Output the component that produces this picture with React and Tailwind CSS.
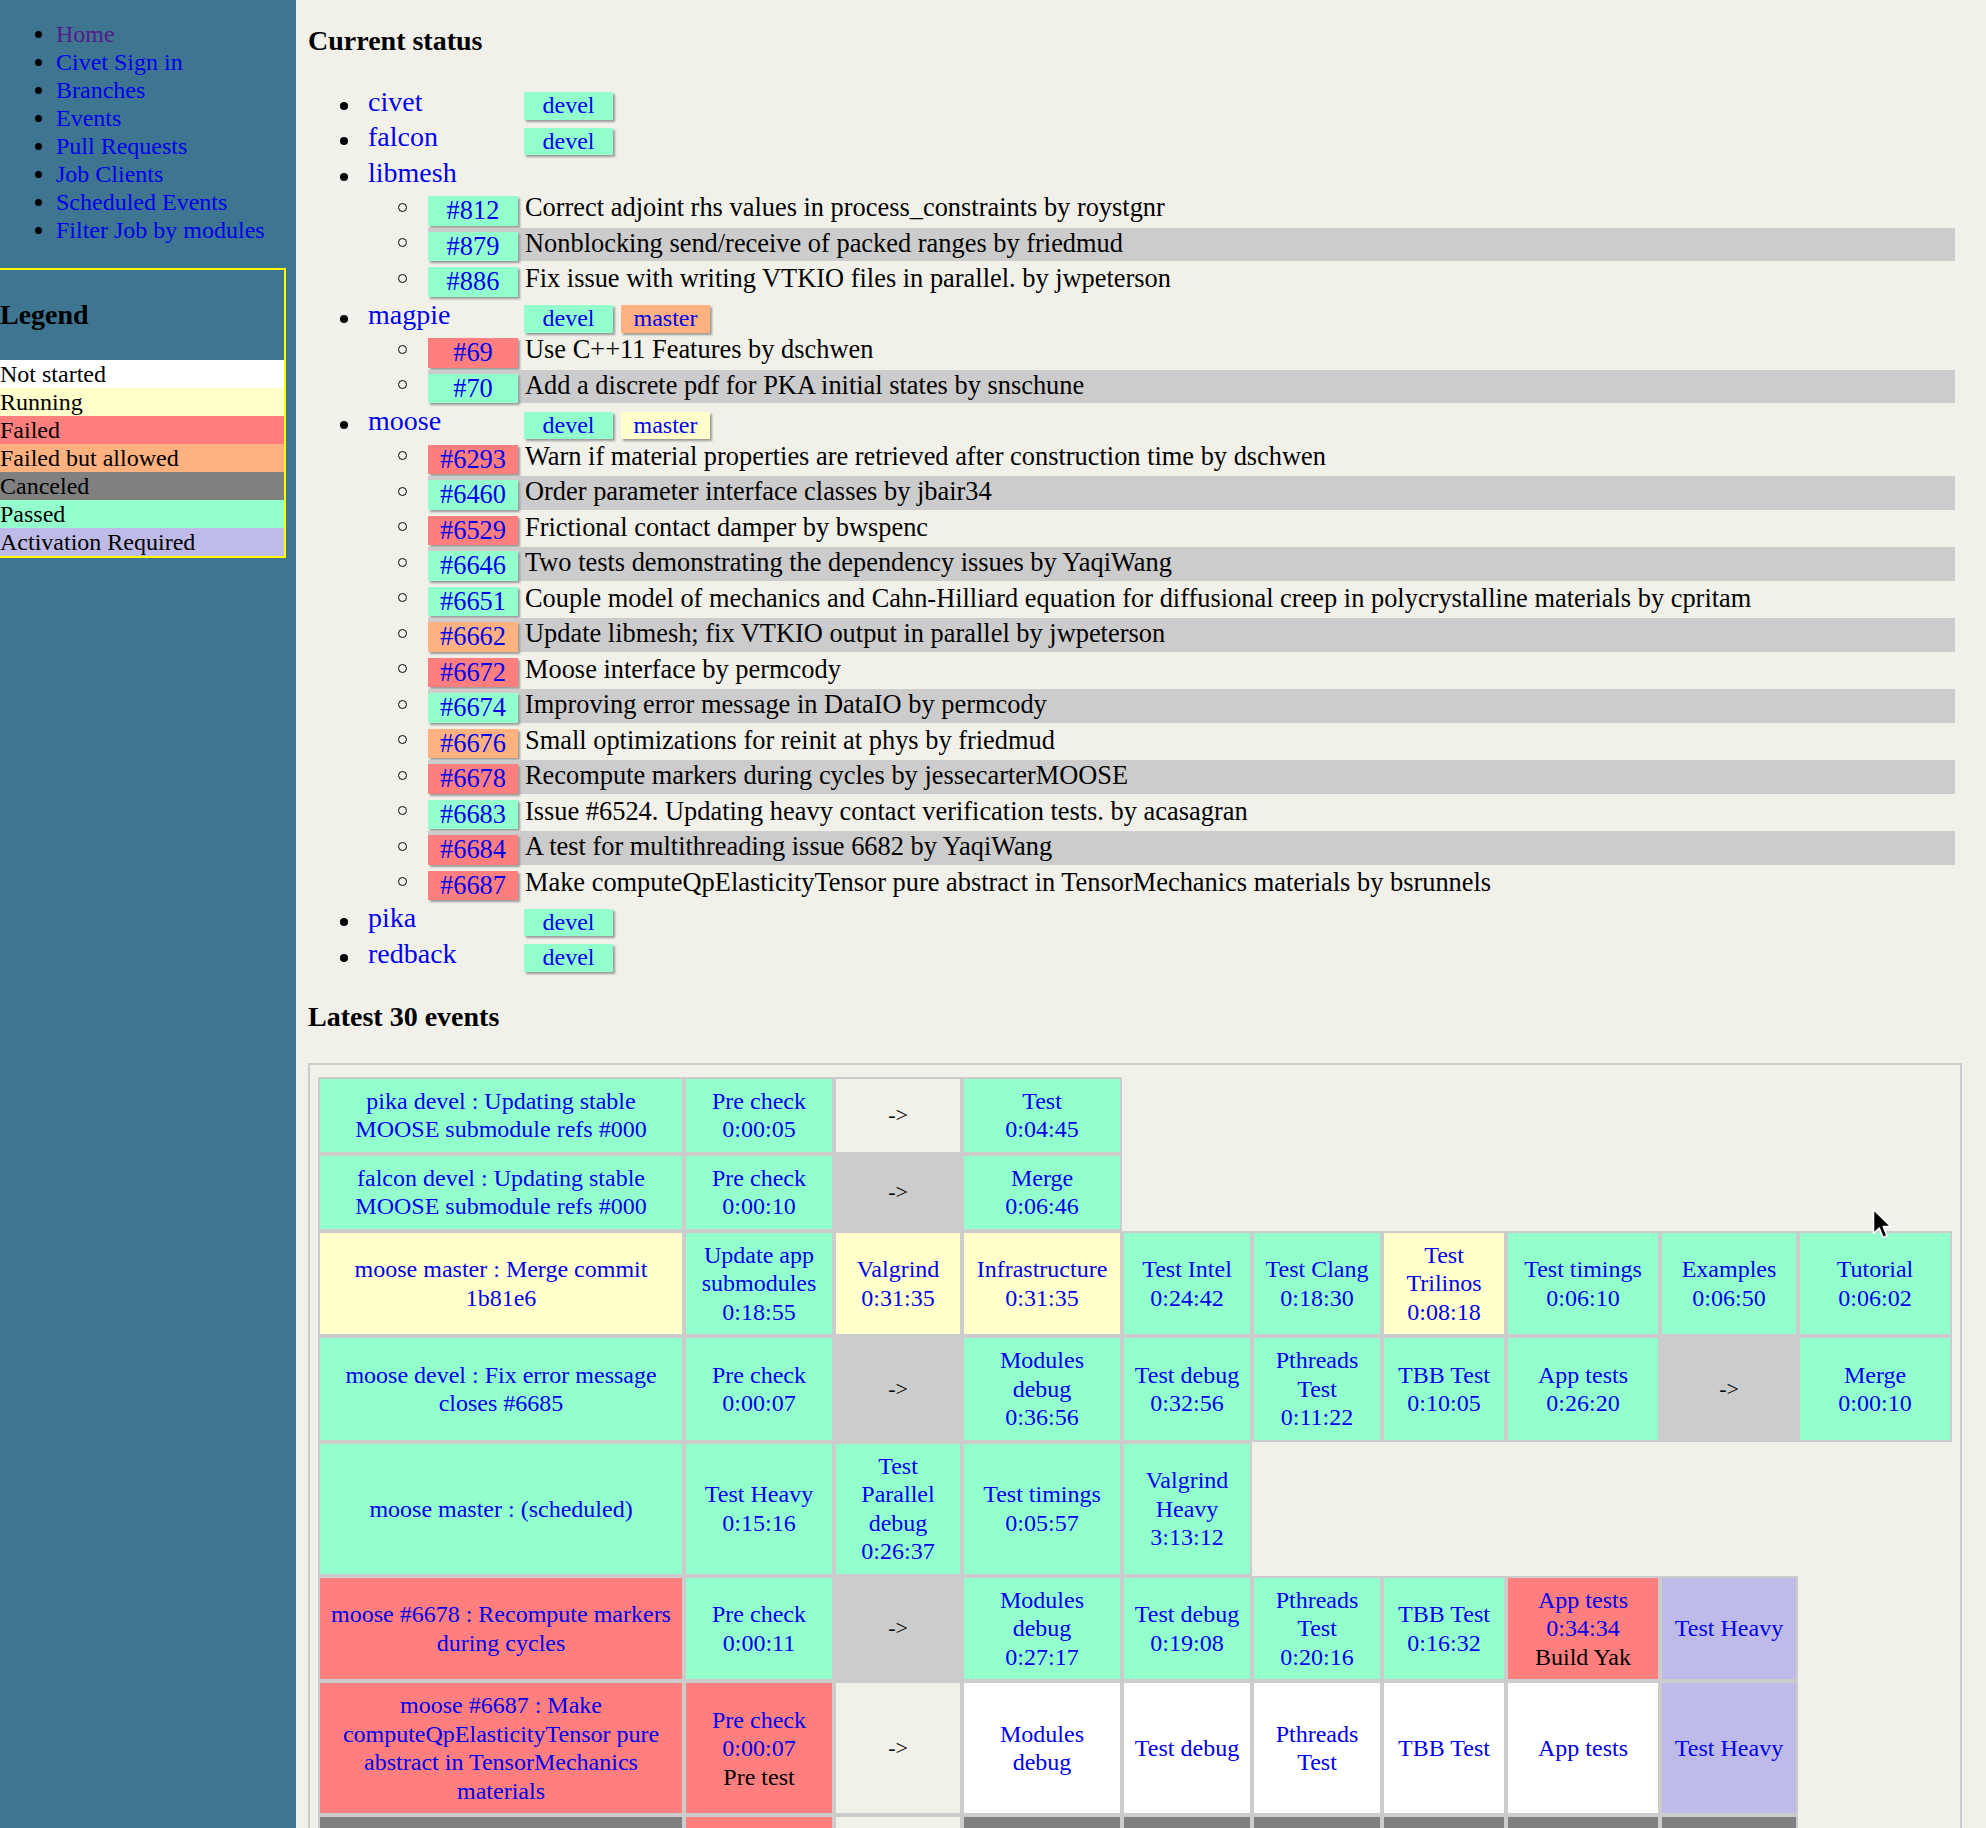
import React from 'react';

const bg = {
  passed: 'bg-[#93ffcc]',
  running: 'bg-[#ffffcc]',
  failed: 'bg-[#ff7f7f]',
  allowed: 'bg-[#ffb27f]',
  canceled: 'bg-[#808080]',
  notStarted: 'bg-white',
  activation: 'bg-[#bfbbe8]',
  waiting: 'bg-[#cccccc]',
  none: '',
};

const navLinks = [
  'Home',
  'Civet Sign in',
  'Branches',
  'Events',
  'Pull Requests',
  'Job Clients',
  'Scheduled Events',
  'Filter Job by modules',
];

const legend = [
  ['Not started', 'notStarted'],
  ['Running', 'running'],
  ['Failed', 'failed'],
  ['Failed but allowed', 'allowed'],
  ['Canceled', 'canceled'],
  ['Passed', 'passed'],
  ['Activation Required', 'activation'],
];

const repos = [
  { name: 'civet', branches: [['devel', 'passed']] },
  { name: 'falcon', branches: [['devel', 'passed']] },
  {
    name: 'libmesh',
    branches: [],
    prs: [
      ['#812', 'passed', 'Correct adjoint rhs values in process_constraints by roystgnr'],
      ['#879', 'passed', 'Nonblocking send/receive of packed ranges by friedmud'],
      ['#886', 'passed', 'Fix issue with writing VTKIO files in parallel. by jwpeterson'],
    ],
  },
  {
    name: 'magpie',
    branches: [['devel', 'passed'], ['master', 'allowed']],
    prs: [
      ['#69', 'failed', 'Use C++11 Features by dschwen'],
      ['#70', 'passed', 'Add a discrete pdf for PKA initial states by snschune'],
    ],
  },
  {
    name: 'moose',
    branches: [['devel', 'passed'], ['master', 'running']],
    prs: [
      ['#6293', 'failed', 'Warn if material properties are retrieved after construction time by dschwen'],
      ['#6460', 'passed', 'Order parameter interface classes by jbair34'],
      ['#6529', 'failed', 'Frictional contact damper by bwspenc'],
      ['#6646', 'passed', 'Two tests demonstrating the dependency issues by YaqiWang'],
      ['#6651', 'passed', 'Couple model of mechanics and Cahn-Hilliard equation for diffusional creep in polycrystalline materials by cpritam'],
      ['#6662', 'allowed', 'Update libmesh; fix VTKIO output in parallel by jwpeterson'],
      ['#6672', 'failed', 'Moose interface by permcody'],
      ['#6674', 'passed', 'Improving error message in DataIO by permcody'],
      ['#6676', 'allowed', 'Small optimizations for reinit at phys by friedmud'],
      ['#6678', 'failed', 'Recompute markers during cycles by jessecarterMOOSE'],
      ['#6683', 'passed', 'Issue #6524. Updating heavy contact verification tests. by acasagran'],
      ['#6684', 'failed', 'A test for multithreading issue 6682 by YaqiWang'],
      ['#6687', 'failed', 'Make computeQpElasticityTensor pure abstract in TensorMechanics materials by bsrunnels'],
    ],
  },
  { name: 'pika', branches: [['devel', 'passed']] },
  { name: 'redback', branches: [['devel', 'passed']] },
];

const arrow = (status) => ({ arrow: true, status });

const events = [
  {
    title: 'pika devel : Updating stable MOOSE submodule refs #000',
    status: 'passed',
    jobs: [
      { name: 'Pre check', time: '0:00:05', status: 'passed' },
      arrow('none'),
      { name: 'Test', time: '0:04:45', status: 'passed' },
    ],
  },
  {
    title: 'falcon devel : Updating stable MOOSE submodule refs #000',
    status: 'passed',
    jobs: [
      { name: 'Pre check', time: '0:00:10', status: 'passed' },
      arrow('waiting'),
      { name: 'Merge', time: '0:06:46', status: 'passed' },
    ],
  },
  {
    title: 'moose master : Merge commit 1b81e6',
    status: 'running',
    jobs: [
      { name: 'Update app submodules', time: '0:18:55', status: 'passed' },
      { name: 'Valgrind', time: '0:31:35', status: 'running' },
      { name: 'Infrastructure', time: '0:31:35', status: 'running' },
      { name: 'Test Intel', time: '0:24:42', status: 'passed' },
      { name: 'Test Clang', time: '0:18:30', status: 'passed' },
      { name: 'Test Trilinos', time: '0:08:18', status: 'running' },
      { name: 'Test timings', time: '0:06:10', status: 'passed' },
      { name: 'Examples', time: '0:06:50', status: 'passed' },
      { name: 'Tutorial', time: '0:06:02', status: 'passed' },
    ],
  },
  {
    title: 'moose devel : Fix error message closes #6685',
    status: 'passed',
    jobs: [
      { name: 'Pre check', time: '0:00:07', status: 'passed' },
      arrow('waiting'),
      { name: 'Modules debug', time: '0:36:56', status: 'passed' },
      { name: 'Test debug', time: '0:32:56', status: 'passed' },
      { name: 'Pthreads Test', time: '0:11:22', status: 'passed' },
      { name: 'TBB Test', time: '0:10:05', status: 'passed' },
      { name: 'App tests', time: '0:26:20', status: 'passed' },
      arrow('waiting'),
      { name: 'Merge', time: '0:00:10', status: 'passed' },
    ],
  },
  {
    title: 'moose master : (scheduled)',
    status: 'passed',
    jobs: [
      { name: 'Test Heavy', time: '0:15:16', status: 'passed' },
      { name: 'Test Parallel debug', time: '0:26:37', status: 'passed' },
      { name: 'Test timings', time: '0:05:57', status: 'passed' },
      { name: 'Valgrind Heavy', time: '3:13:12', status: 'passed' },
    ],
  },
  {
    title: 'moose #6678 : Recompute markers during cycles',
    status: 'failed',
    jobs: [
      { name: 'Pre check', time: '0:00:11', status: 'passed' },
      arrow('waiting'),
      { name: 'Modules debug', time: '0:27:17', status: 'passed' },
      { name: 'Test debug', time: '0:19:08', status: 'passed' },
      { name: 'Pthreads Test', time: '0:20:16', status: 'passed' },
      { name: 'TBB Test', time: '0:16:32', status: 'passed' },
      { name: 'App tests', time: '0:34:34', note: 'Build Yak', status: 'failed' },
      { name: 'Test Heavy', status: 'activation' },
    ],
  },
  {
    title: 'moose #6687 : Make computeQpElasticityTensor pure abstract in TensorMechanics materials',
    status: 'failed',
    jobs: [
      { name: 'Pre check', time: '0:00:07', note: 'Pre test', status: 'failed' },
      arrow('none'),
      { name: 'Modules debug', status: 'notStarted' },
      { name: 'Test debug', status: 'notStarted' },
      { name: 'Pthreads Test', status: 'notStarted' },
      { name: 'TBB Test', status: 'notStarted' },
      { name: 'App tests', status: 'notStarted' },
      { name: 'Test Heavy', status: 'activation' },
    ],
  },
];

// next event row, only its top edge shows at the bottom of the window
const partialRow = ['canceled', 'failed', 'none', 'canceled', 'canceled', 'canceled', 'canceled', 'canceled', 'canceled'];

const gridCols = 'grid grid-cols-[366px_150px_128px_160px_130px_130px_124px_154px_138px_154px]';

const cellBase =
  'flex flex-col items-center justify-center border-2 border-[#cccccc] px-[6px] py-[8px] text-center leading-[28.5px]';

function Badge({ label, status, pr }) {
  if (pr) {
    return (
      <a
        href="#"
        className={`mt-[4px] block h-[29.5px] w-[90px] shrink-0 text-center leading-[29.5px] text-[#0000ee] shadow-[2px_2px_2px_#9a9a9a] ${bg[status]}`}
      >
        {label}
      </a>
    );
  }
  return (
    <a
      href="#"
      className={`mt-[6.5px] block h-[27.5px] w-[89px] shrink-0 text-center leading-[27.5px] text-[#0000ee] shadow-[2px_2px_2px_#9a9a9a] ${bg[status]}`}
    >
      {label}
    </a>
  );
}

function RepoRow({ repo }) {
  return (
    <>
      <div className="flex h-[33.5px] items-start">
        <span className="ml-[32px] mt-[16px] block size-[8px] shrink-0 rounded-full bg-black" />
        <a href="#" className="ml-[20px] block w-[156px] shrink-0 text-[28px] leading-[32px] text-[#0000ee]">
          {repo.name}
        </a>
        <div className="flex gap-[8px]">
          {repo.branches.map(([b, s]) => (
            <Badge key={b} label={b} status={s} />
          ))}
        </div>
      </div>
      {repo.prs?.map(([num, status, desc], i) => (
        <div key={num} className="flex h-[33.5px] items-start text-[26.4px]">
          <span className="ml-[89.5px] mt-[10.5px] block size-[9px] shrink-0 rounded-full border-[1.5px] border-black" />
          <div className={`ml-[21.5px] mr-[7px] flex h-full flex-1 items-start ${i % 2 === 1 ? 'bg-[#cccccc]' : ''}`}>
            <Badge label={num} status={status} pr />
            <span className="ml-[7px] whitespace-nowrap leading-[30px]">{desc}</span>
          </div>
        </div>
      ))}
    </>
  );
}

function JobCell({ job }) {
  if (job.arrow) {
    return (
      <div className={`${cellBase} ${bg[job.status]}`}>
        <span className="text-[22px]">-&gt;</span>
      </div>
    );
  }
  return (
    <div className={`${cellBase} ${bg[job.status]}`}>
      <a href="#" className="text-[#0000ee]">
        <div>{job.name}</div>
        {job.time && <div>{job.time}</div>}
      </a>
      {job.note && <div>{job.note}</div>}
    </div>
  );
}

export default function App() {
  return (
    <div className="relative flex h-[1828px] overflow-hidden bg-[#f1f1ea] font-['Liberation_Serif',serif] text-[24px] leading-[27.6px] text-black">
      <aside className="w-[296px] shrink-0 bg-[#3e7590]">
        <ul className="list-disc pl-[56px] pt-[20px] leading-[28px]">
          {navLinks.map((l, i) => (
            <li key={l}>
              <a href="#" className={i === 0 ? 'text-[#551a8b]' : 'text-[#0000ee]'}>
                {l}
              </a>
            </li>
          ))}
        </ul>
        <div className="-ml-[2px] mt-[24px] w-[288px] border-2 border-[#ffff00]">
          <h3 className="my-[29px] text-[28px] font-bold leading-[32px]">Legend</h3>
          <div>
            {legend.map(([label, s]) => (
              <div key={label} className={`h-[28px] leading-[28px] ${bg[s]}`}>
                {label}
              </div>
            ))}
          </div>
        </div>
      </aside>

      <main className="min-w-0 flex-1 pl-[12px] pr-[24px] pt-[25px]">
        <h3 className="text-[28px] font-bold leading-[32px]">Current status</h3>
        <div className="mt-[28.8px] flex flex-col gap-[2px]">
          {repos.map((r) => (
            <RepoRow key={r.name} repo={r} />
          ))}
        </div>

        <h3 className="mt-[29.7px] text-[28px] font-bold leading-[32px]">Latest 30 events</h3>
        <div className="mt-[30px] border-2 border-[#cccccc] pb-[12px] pl-[8px] pt-[12px]">
          {events.map((ev) => (
            <div key={ev.title} className={gridCols}>
              <div className={`${cellBase} ${bg[ev.status]}`}>
                <a href="#" className="text-[#0000ee]">
                  {ev.title}
                </a>
              </div>
              {ev.jobs.map((job, i) => (
                <JobCell key={i} job={job} />
              ))}
            </div>
          ))}
          <div className={gridCols}>
            {partialRow.map((s, i) => (
              <div key={i} className={`h-[77px] border-2 border-[#cccccc] ${bg[s]}`} />
            ))}
          </div>
        </div>
      </main>

      <svg
        className="absolute left-[1872px] top-[1208px]"
        width="22"
        height="33"
        viewBox="0 0 22 33"
      >
        <path
          d="M1.5 1.5 L1.5 25.5 L7.2 20 L11 29.5 L15 27.8 L11.3 18.6 L19 18.6 Z"
          fill="black"
          stroke="white"
          strokeWidth="1.6"
          strokeLinejoin="round"
        />
      </svg>
    </div>
  );
}
